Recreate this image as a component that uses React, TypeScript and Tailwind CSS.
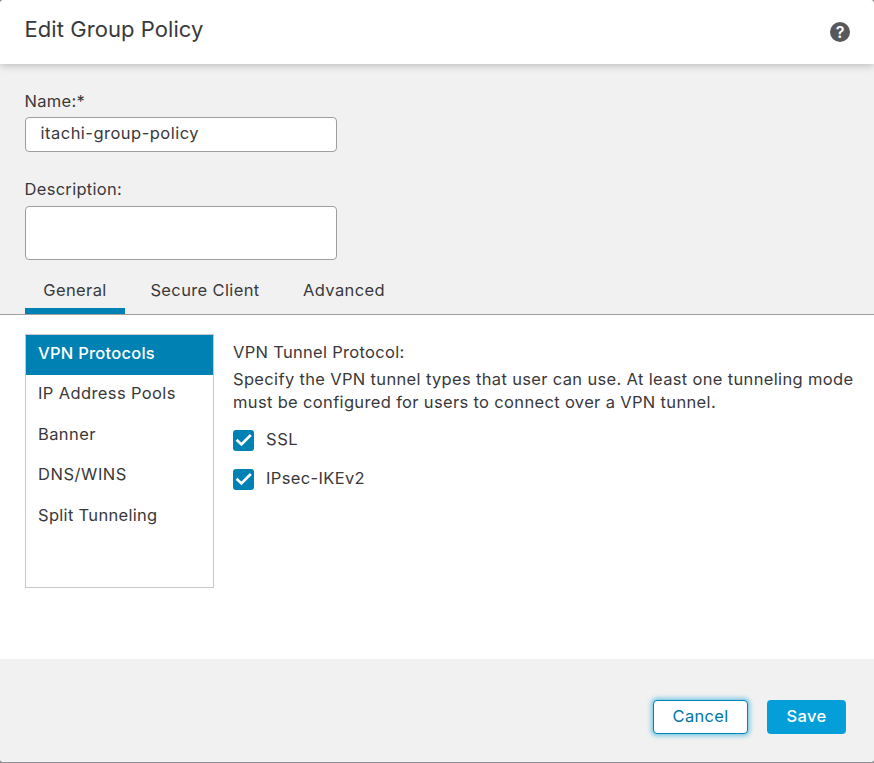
const tabs = [
  { label: "General", style: "w-[100px] border-b-6 border-[#0081b3]" },
  { label: "Secure Client", style: "w-[160px]" },
  { label: "Advanced", style: "w-[118px]" },
];
const items = [
  { label: "VPN Protocols", style: "bg-[#0081b3] font-medium tracking-[0.25px] text-white" },
  { label: "IP Address Pools", style: "tracking-[0.38px]" },
  { label: "Banner", style: "tracking-[0.4px]" },
  { label: "DNS/WINS", style: "tracking-[0.55px]" },
  { label: "Split Tunneling", style: "tracking-[0.31px]" },
];

function Check({ label, style }: { label: string; style: string }) {
  return (
    <div className="flex h-[39px] items-start">
      <span className="mt-[2px] flex h-[21px] w-[21px] rounded-[3px] bg-[#0081b3]">
        <svg width="21" height="21" viewBox="0 0 21 21" fill="none" stroke="white" strokeWidth="2.6">
          <path d="M3.6 9.8 8.4 14.4 17.8 5" />
        </svg>
      </span>
      <span className={`ml-[12px] ${style}`}>{label}</span>
    </div>
  );
}

export default function App() {
  return (
    <div className="h-[763px] w-[874px] bg-[#8b8b90]">
      <div className="flex h-[763px] flex-col overflow-hidden rounded-[4px] border-b border-[#8f8f95] bg-white font-['Inter',sans-serif] text-[16.5px] leading-[22px] font-[380] tracking-[0.3px] text-[#39393b]">
        <header className="z-10 flex h-[64px] shrink-0 items-start justify-between bg-white pt-[15px] pr-[24px] pl-[24.5px] shadow-[0_1px_8px_rgba(0,0,0,0.25)]">
          <h1 className="text-[22px] leading-[28px] tracking-[0.06px]">Edit Group Policy</h1>
          <span className="mt-[7px] flex h-[20px] w-[20px] items-center justify-center rounded-full bg-[#58585b] text-[16px] font-semibold tracking-normal text-white">?</span>
        </header>
        <section className="h-[251px] shrink-0 border-b border-[#9e9ea2] bg-[#f1f1f1] pt-[26px] pl-[25px]">
          <label className="-ml-[0.5px] block h-[27px]">Name:*</label>
          <div className="h-[35px] w-[312px] rounded-[4px] border border-[#9e9ea2] bg-white pt-[4px] pl-[14.5px] tracking-[0.49px]">itachi-group-policy</div>
          <label className="mt-[26px] -ml-[0.5px] block h-[28px]">Description:</label>
          <div className="h-[54px] w-[312px] rounded-[4px] border border-[#9e9ea2] bg-white" />
          <nav className="flex h-[54px] pt-[19px]">
            {tabs.map((t) => (
              <div key={t.label} className={`flex h-[35px] justify-center whitespace-nowrap tracking-[0.37px] ${t.style}`}>{t.label}</div>
            ))}
          </nav>
        </section>
        <main className="flex h-[344px] shrink-0 pt-[19px] pl-[25px]">
          <ul className="h-[254px] w-[189px] border border-[#c8c8cb]">
            {items.map((t) => (
              <li key={t.label} className={`h-[40.4px] pt-[7px] pl-[12px] ${t.style}`}>{t.label}</li>
            ))}
          </ul>
          <div className="ml-[19px] pt-[7px]">
            <div className="h-[27px]">VPN Tunnel Protocol:</div>
            <p className="mb-[14px] leading-[23px] tracking-[0.34px] whitespace-nowrap">
              Specify the VPN tunnel types that user can use. At least one tunneling mode
              <br />
              must be configured for users to connect over a VPN tunnel.
            </p>
            <Check label="SSL" style="tracking-[0.6px]" />
            <Check label="IPsec-IKEv2" style="tracking-[0.36px]" />
          </div>
        </main>
        <footer className="flex flex-1 items-start justify-end gap-[19px] bg-[#f1f1f1] pt-[41px] pr-[28px]">
          <button className="h-[34px] w-[95px] rounded-[4px] border border-[#0081b3] bg-white pb-[2px] text-[#0076a5] shadow-[0_0_4px_2px_rgba(4,159,217,0.5)]">Cancel</button>
          <button className="h-[34px] w-[79px] rounded-[4px] bg-[#049fd9] pb-[2px] font-medium text-white">Save</button>
        </footer>
      </div>
    </div>
  );
}
